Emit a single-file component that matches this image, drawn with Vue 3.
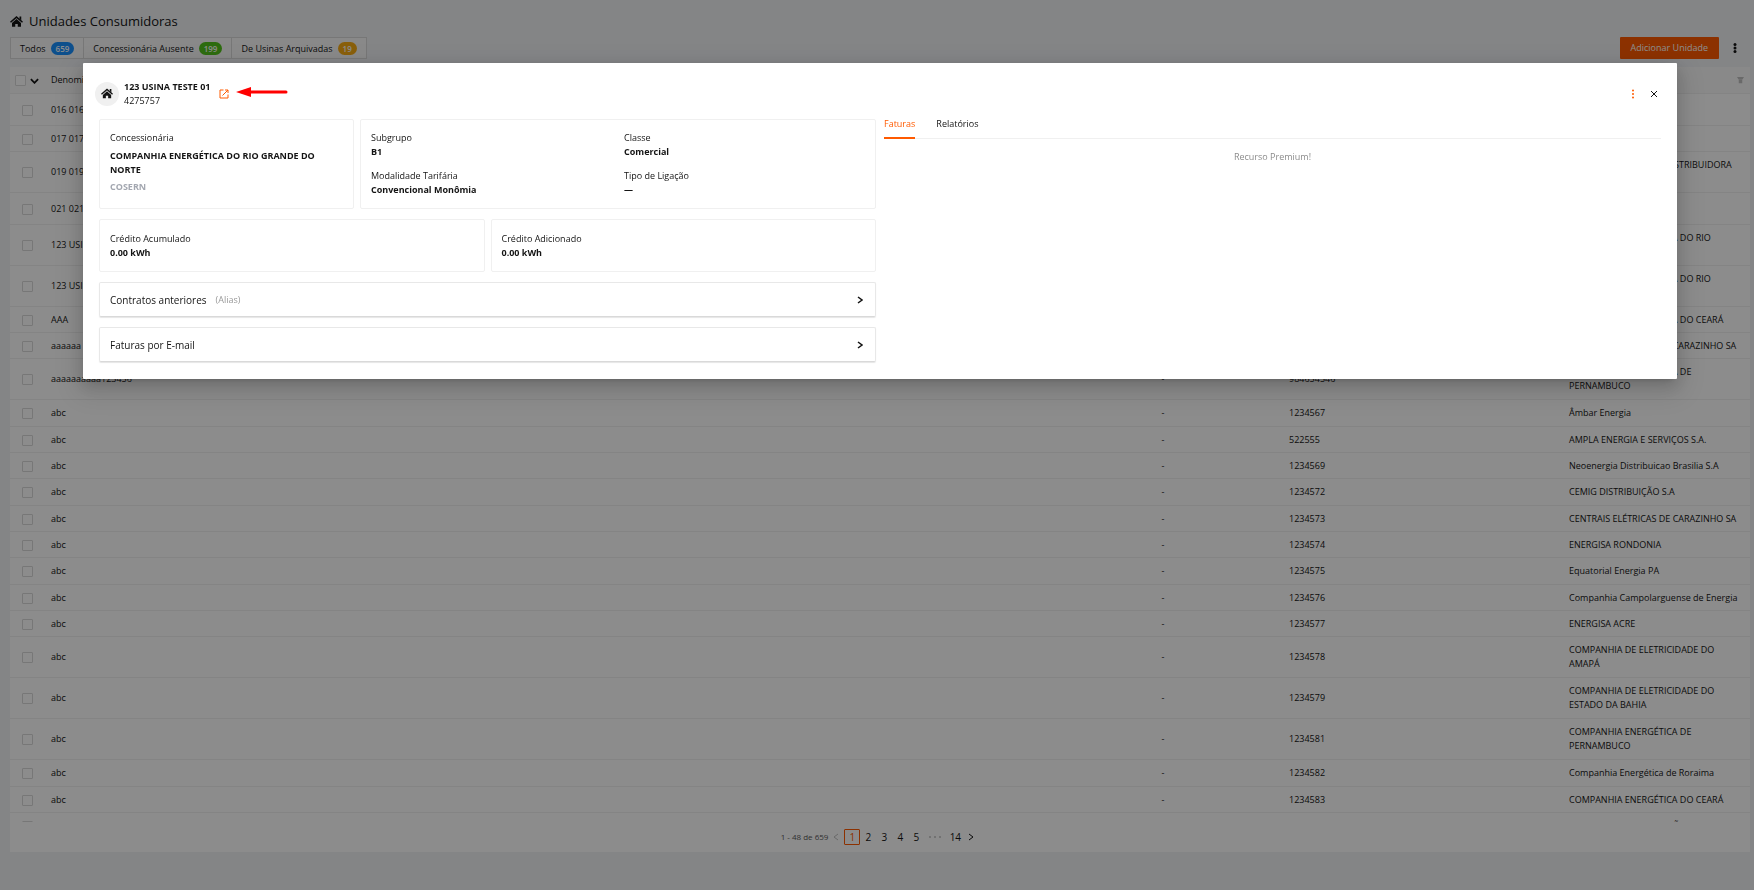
<template>
  <div class="page">
    <header class="page-header">
      <svg class="home-icon" viewBox="0 0 26 22">
        <path d="M13 6 4 14v7.500h6.500V16h5v5.500H22V14z" />
        <path d="M1 12.500 13 2.200l12 10.300" class="roof" />
        <path d="M19 1h3.500v8L19 6z" />
      </svg>
      <h1>Unidades Consumidoras</h1>
    </header>

    <!-- Filters -->
    <div class="toolbar">
      <div class="filters">
        <button v-for="filter in filters" :key="filter.label" type="button" class="filter-btn">
          {{ filter.label }}
          <span class="badge" :class="filter.color">{{ filter.count }}</span>
        </button>
      </div>
      <div class="toolbar-actions">
        <button type="button" class="add-btn">Adicionar Unidade</button>
        <button type="button" class="icon-btn" aria-label="Mais opções">
          <svg class="kebab" viewBox="0 0 4 10">
            <circle cx="2" cy="1.500" r="1.500" />
            <circle cx="2" cy="5" r="1.500" />
            <circle cx="2" cy="8.500" r="1.500" />
          </svg>
        </button>
      </div>
    </div>

    <!-- Units table -->
    <main class="table-card">
      <div class="table-scroll">
        <table class="units">
          <colgroup>
            <col class="col-check" />
            <col />
            <col class="col-dash" />
            <col class="col-number" />
            <col class="col-company" />
          </colgroup>
          <thead>
            <tr>
              <th class="check-head">
                <input type="checkbox" class="check" aria-label="Selecionar todos" />
                <svg class="chevron-down" viewBox="0 0 10 6"><path d="M1 1l4 4 4-4" /></svg>
              </th>
              <th>Denominação</th>
              <th></th>
              <th></th>
              <th class="filter-head">
                <svg class="filter-icon" viewBox="0 0 8 8"><path d="M0 0h8L6 3H2zM2 3.500h4V7H2z" /></svg>
              </th>
            </tr>
          </thead>
          <tbody>
            <tr v-for="(unit, index) in units" :key="index" class="row" :class="unit.size">
              <td class="check-cell">
                <input type="checkbox" class="check" :aria-label="`Selecionar ${unit.name}`" />
              </td>
              <td>{{ unit.name }}</td>
              <td class="dash">-</td>
              <td>{{ unit.number }}</td>
              <td>{{ unit.company }}</td>
            </tr>
          </tbody>
        </table>
      </div>

      <nav class="pagination" aria-label="Paginação">
        <span class="total">1 - 48 de 659</span>
        <button type="button" class="page-btn muted" aria-label="Anterior">
          <svg class="arrow" viewBox="0 0 6 8"><path d="M5 1 1 4l4 3" /></svg>
        </button>
        <button
          v-for="page in [1, 2, 3, 4, 5]"
          :key="page"
          type="button"
          class="page-btn"
          :class="{ active: page === currentPage }"
          @click="currentPage = page"
        >
          {{ page }}
        </button>
        <svg class="ellipsis" viewBox="0 0 14 2">
          <circle cx="2" cy="1" r="1" />
          <circle cx="7" cy="1" r="1" />
          <circle cx="12" cy="1" r="1" />
        </svg>
        <button type="button" class="page-btn">14</button>
        <button type="button" class="page-btn" aria-label="Próxima">
          <svg class="arrow" viewBox="0 0 6 8"><path d="M1 1l4 3-4 3" /></svg>
        </button>
      </nav>
    </main>

    <!-- Unit details -->
    <div v-if="open" class="overlay">
      <section class="modal" role="dialog" aria-label="123 USINA TESTE 01">
        <header class="modal-header">
          <span class="avatar">
            <svg class="home-icon small" viewBox="0 0 26 22">
              <path d="M13 6 4 14v7.500h6.500V16h5v5.500H22V14z" />
              <path d="M1 12.500 13 2.200l12 10.300" class="roof" />
              <path d="M19 1h3.500v8L19 6z" />
            </svg>
          </span>
          <div class="unit-title">
            <h2>123 USINA TESTE 01</h2>
            <p>4275757</p>
          </div>
          <a href="#" class="open-link" aria-label="Abrir unidade">
            <svg viewBox="0 0 10 10">
              <path d="M4.500 1H1v8h8V5.500M6 1h3v3M9 1 3.500 6.500" />
            </svg>
          </a>
          <svg class="pointer" viewBox="0 0 52 10">
            <path d="M0 5 15 0v3.500h35q1.500 0 1.500 1.500t-1.500 1.500H15V10z" />
          </svg>
          <div class="modal-actions">
            <button type="button" class="icon-btn orange" aria-label="Opções da unidade">
              <svg class="kebab" viewBox="0 0 4 10">
                <circle cx="2" cy="1.500" r="1" />
                <circle cx="2" cy="5" r="1" />
                <circle cx="2" cy="8.500" r="1" />
              </svg>
            </button>
            <button type="button" class="icon-btn" aria-label="Fechar" @click="open = false">
              <svg class="close" viewBox="0 0 8 8"><path d="M1 1l6 6M7 1 1 7" /></svg>
            </button>
          </div>
        </header>

        <div class="modal-body">
          <div class="details">
            <div class="thirds">
              <div class="info-card">
                <p>Concessionária</p>
                <p class="value company">COMPANHIA ENERGÉTICA DO RIO GRANDE DO NORTE</p>
                <p class="value acronym">COSERN</p>
              </div>
              <dl class="info-card wide">
                <div v-for="field in fields" :key="field.label">
                  <dt>{{ field.label }}</dt>
                  <dd class="value">{{ field.value }}</dd>
                </div>
              </dl>
            </div>
            <div class="halves">
              <div v-for="credit in credits" :key="credit" class="info-card credit">
                <p>{{ credit }}</p>
                <p class="value">0.00 kWh</p>
              </div>
            </div>
            <button v-for="panel in panels" :key="panel.title" type="button" class="panel">
              <span>{{ panel.title }}</span>
              <small v-if="panel.hint">{{ panel.hint }}</small>
              <svg class="panel-arrow" viewBox="0 0 6 8"><path d="M1 1l4 3-4 3" /></svg>
            </button>
          </div>

          <div class="side">
            <div class="tabs" role="tablist">
              <button
                v-for="name in ['Faturas', 'Relatórios']"
                :key="name"
                type="button"
                role="tab"
                class="tab"
                :class="{ active: name === tab }"
                :aria-selected="name === tab"
                @click="tab = name"
              >
                {{ name }}
              </button>
            </div>
            <p class="premium">Recurso Premium!</p>
          </div>
        </div>
      </section>
    </div>
  </div>
</template>

<script setup>
import { ref } from 'vue'

const open = ref(true)
const tab = ref('Faturas')
const currentPage = ref(1)

const filters = [
  { label: 'Todos', count: 659, color: 'blue' },
  { label: 'Concessionária Ausente', count: 199, color: 'green' },
  { label: 'De Usinas Arquivadas', count: 19, color: 'amber' }
]

const units = [
  { name: '016 016', number: '', company: '', size: 'medium' },
  { name: '017 017', number: '', company: '' },
  { name: '019 019', number: '', company: 'AMAZONAS ENERGIA - DISTRIBUIDORA DE ENERGIA', size: 'tall' },
  { name: '021 021', number: '', company: '', size: 'medium' },
  { name: '123 USINA TESTE 01', number: '4275757', company: 'COMPANHIA ENERGÉTICA DO RIO GRANDE DO NORTE', size: 'tall' },
  { name: '123 USINA TESTE 02', number: '4275758', company: 'COMPANHIA ENERGÉTICA DO RIO GRANDE DO NORTE', size: 'tall' },
  { name: 'AAA', number: '', company: 'COMPANHIA ENERGÉTICA DO CEARÁ' },
  { name: 'aaaaaa', number: '', company: 'CENTRAIS ELÉTRICAS DE CARAZINHO SA' },
  { name: 'aaaaaaaaaa123456', number: '984654546', company: 'COMPANHIA ENERGÉTICA DE PERNAMBUCO', size: 'tall' },
  { name: 'abc', number: '1234567', company: 'Âmbar Energia' },
  { name: 'abc', number: '522555', company: 'AMPLA ENERGIA E SERVIÇOS S.A.' },
  { name: 'abc', number: '1234569', company: 'Neoenergia Distribuicao Brasilia S.A' },
  { name: 'abc', number: '1234572', company: 'CEMIG DISTRIBUIÇÃO S.A' },
  { name: 'abc', number: '1234573', company: 'CENTRAIS ELÉTRICAS DE CARAZINHO SA' },
  { name: 'abc', number: '1234574', company: 'ENERGISA RONDONIA' },
  { name: 'abc', number: '1234575', company: 'Equatorial Energia PA' },
  { name: 'abc', number: '1234576', company: 'Companhia Campolarguense de Energia' },
  { name: 'abc', number: '1234577', company: 'ENERGISA ACRE' },
  { name: 'abc', number: '1234578', company: 'COMPANHIA DE ELETRICIDADE DO AMAPÁ', size: 'tall' },
  { name: 'abc', number: '1234579', company: 'COMPANHIA DE ELETRICIDADE DO ESTADO DA BAHIA', size: 'tall' },
  { name: 'abc', number: '1234581', company: 'COMPANHIA ENERGÉTICA DE PERNAMBUCO', size: 'tall' },
  { name: 'abc', number: '1234582', company: 'Companhia Energética de Roraima' },
  { name: 'abc', number: '1234583', company: 'COMPANHIA ENERGÉTICA DO CEARÁ' },
  { name: 'abc', number: '1234584', company: 'EQUATORIAL DISTRIBUIÇÃO' }
]

const fields = [
  { label: 'Subgrupo', value: 'B1' },
  { label: 'Classe', value: 'Comercial' },
  { label: 'Modalidade Tarifária', value: 'Convencional Monômia' },
  { label: 'Tipo de Ligação', value: '—' }
]

const credits = ['Crédito Acumulado', 'Crédito Adicionado']

const panels = [
  { title: 'Contratos anteriores', hint: '(Alias)' },
  { title: 'Faturas por E-mail' }
]
</script>

<style>
body {
  margin: 0;
  background: #f0f2f5;
}
</style>

<style scoped>
.page {
  display: flex;
  flex-direction: column;
  box-sizing: border-box;
  height: 100vh;
  padding: 10px 4px 38px 10px;
  overflow: hidden;
  background: #f0f2f5;
  color: #141414;
  font-family: "Segoe UI", "Open Sans", "Noto Sans", sans-serif;
  font-size: 9px;
  line-height: 14px;
}

h1,
h2,
p,
dl,
dd {
  margin: 0;
}

button {
  margin: 0;
  padding: 0;
  border: none;
  background: none;
  color: inherit;
  font: inherit;
  cursor: pointer;
}

svg {
  display: block;
  flex-shrink: 0;
  fill: none;
  stroke: currentColor;
}

.page-header {
  display: flex;
  align-items: center;
  gap: 6px;
  height: 22px;
}

.page-header h1 {
  font-size: 13px;
  font-weight: 500;
  line-height: 20px;
}

.home-icon {
  width: 13px;
  height: 11px;
  fill: currentColor;
  stroke: none;
}

.home-icon .roof {
  fill: none;
  stroke: currentColor;
  stroke-width: 3;
}

.home-icon.small {
  width: 12px;
  height: 11px;
}

/* Toolbar */
.toolbar {
  display: flex;
  justify-content: space-between;
  margin: 5px 0 8px;
}

.filters {
  display: flex;
}

.filter-btn {
  display: flex;
  align-items: center;
  gap: 5px;
  height: 22px;
  padding: 1px 9px 0;
  border: 1px solid #d9d9d9;
  background: #fafafa;
}

.filter-btn + .filter-btn {
  border-left: none;
}

.badge {
  height: 13px;
  padding: 0 5px;
  border-radius: 7px;
  color: #fff;
  font-size: 8px;
  font-weight: 600;
  line-height: 13px;
}

.blue {
  background: #1890ff;
}

.green {
  background: #52c41a;
}

.amber {
  background: #faad14;
}

.toolbar-actions {
  display: flex;
  align-items: center;
  gap: 8px;
  padding-right: 8px;
}

.add-btn {
  height: 22px;
  padding: 0 11px;
  border-radius: 1px;
  background: #ff5a00;
  color: #fff;
}

.icon-btn {
  display: flex;
  align-items: center;
  justify-content: center;
  width: 15px;
  height: 16px;
}

.kebab {
  width: 4px;
  height: 10px;
  fill: currentColor;
  stroke: none;
}

/* Table */
.table-card {
  display: flex;
  flex: 1;
  flex-direction: column;
  min-height: 0;
  background: #fff;
}

.table-scroll {
  flex: 1;
  min-height: 0;
  overflow: hidden;
}

.units {
  width: 100%;
  border-spacing: 0;
  table-layout: fixed;
}

.col-check {
  width: 35px;
}

.col-dash {
  width: 240px;
}

.col-number {
  width: 280px;
}

.col-company {
  width: 187px;
}

.units th,
.units td {
  box-sizing: border-box;
  height: 26px;
  padding: 0 6px;
  border-bottom: 1px solid #f0f0f0;
  text-align: left;
  font-weight: 400;
}

.units th {
  height: 27px;
  background: #fafafa;
}

.units .row:nth-child(3n + 10) td {
  height: 27px;
}

.units .row.medium td {
  height: 32px;
}

.units .row.tall td {
  height: 41px;
}

.units .check-head {
  padding: 0 5px;
}

.units .check-cell {
  padding: 0 0 0 12px;
}

.check {
  display: inline-block;
  box-sizing: border-box;
  width: 11px;
  height: 11px;
  margin: 0;
  border: 1px solid #d9d9d9;
  border-radius: 1px;
  background: #fff;
  appearance: none;
  vertical-align: middle;
}

.chevron-down {
  display: inline-block;
  width: 9px;
  height: 6px;
  margin-left: 4px;
  stroke-width: 2;
  vertical-align: middle;
}

.filter-icon {
  width: 7px;
  height: 7px;
  margin-left: auto;
  fill: #bfbfbf;
  stroke: none;
}

.units .dash {
  text-align: center;
}

.pagination {
  display: flex;
  align-items: center;
  justify-content: center;
  height: 30px;
  font-size: 10px;
}

.total {
  color: #595959;
  font-size: 8px;
}

.page-btn {
  display: flex;
  align-items: center;
  justify-content: center;
  box-sizing: border-box;
  min-width: 16px;
  height: 16px;
  border-radius: 1px;
}

.page-btn.active {
  border: 1px solid #ff5a00;
  color: #ff5a00;
}

.page-btn.muted {
  color: #bfbfbf;
}

.ellipsis {
  width: 14px;
  height: 2px;
  margin: 0 5px 0 4px;
  fill: #bfbfbf;
  stroke: none;
}

.arrow {
  width: 6px;
  height: 8px;
}

/* Modal */
.overlay {
  position: fixed;
  inset: 0;
  padding: 63px 77px 0 83px;
  background: rgba(0, 0, 0, 0.45);
}

.modal {
  padding-bottom: 17px;
  border-radius: 1px;
  background: #fff;
  box-shadow: 0 3px 6px -4px rgba(0, 0, 0, 0.24), 0 6px 16px rgba(0, 0, 0, 0.16), 0 9px 28px 8px rgba(0, 0, 0, 0.1);
}

.modal-header {
  display: flex;
  align-items: center;
  height: 56px;
  padding: 5px 16px 0 12px;
  box-sizing: border-box;
}

.avatar {
  display: flex;
  align-items: center;
  justify-content: center;
  width: 24px;
  height: 24px;
  margin-right: 5px;
  border-radius: 50%;
  background: #f0f0f0;
}

.unit-title h2 {
  font-size: 9px;
  font-weight: 700;
  line-height: 14px;
}

.open-link {
  margin-left: 9px;
  color: #ff5a00;
}

.open-link svg {
  width: 10px;
  height: 10px;
}

.pointer {
  width: 52px;
  height: 10px;
  margin: 0 0 4px 7px;
  fill: #f00;
  stroke: none;
}

.modal-actions {
  display: flex;
  gap: 6px;
  margin-left: auto;
}

.orange {
  color: #ff5a00;
}

.close {
  width: 8px;
  height: 8px;
}

.modal-body {
  display: grid;
  grid-template-columns: repeat(2, minmax(0, 1fr));
  gap: 8px;
  padding: 0 16px;
}

.details {
  display: flex;
  flex-direction: column;
  gap: 10px;
}

.thirds,
.halves {
  display: grid;
  grid-template-columns: repeat(3, minmax(0, 1fr));
  gap: 6px;
}

.halves {
  grid-template-columns: repeat(2, minmax(0, 1fr));
}

.info-card {
  padding: 11px 10px;
  border: 1px solid #f0f0f0;
  border-radius: 2px;
}

.info-card.wide {
  display: grid;
  grid-column: span 2;
  grid-template-columns: repeat(2, minmax(0, 1fr));
  gap: 10px 12px;
}

.info-card.credit {
  padding: 12px 10px 11px;
}

.value {
  font-weight: 700;
}

.company {
  margin: 4px 0 3px;
}

.acronym {
  color: #a3a7b0;
}

.panel {
  display: flex;
  align-items: center;
  gap: 9px;
  height: 35px;
  padding: 0 12px 0 10px;
  border: 1px solid #e8e8e8;
  border-bottom-color: #d9d9d9;
  border-radius: 2px;
  box-shadow: 0 1px 1px rgba(0, 0, 0, 0.1);
  font-size: 10px;
}

.panel small {
  color: #999;
  font-size: 9px;
}

.panel-arrow {
  width: 6px;
  height: 8px;
  margin-left: auto;
  stroke-width: 1.5;
}

.tabs {
  display: flex;
  gap: 21px;
  height: 19px;
  border-bottom: 1px solid #f0f0f0;
}

.tab {
  height: 20px;
  padding-bottom: 8px;
  box-sizing: border-box;
  border-bottom: 2px solid transparent;
  line-height: 10px;
}

.tab.active {
  border-bottom-color: #ff5a00;
  color: #ff5a00;
  font-weight: 500;
}

.premium {
  margin-top: 11px;
  color: #8c8c8c;
  text-align: center;
}
</style>
